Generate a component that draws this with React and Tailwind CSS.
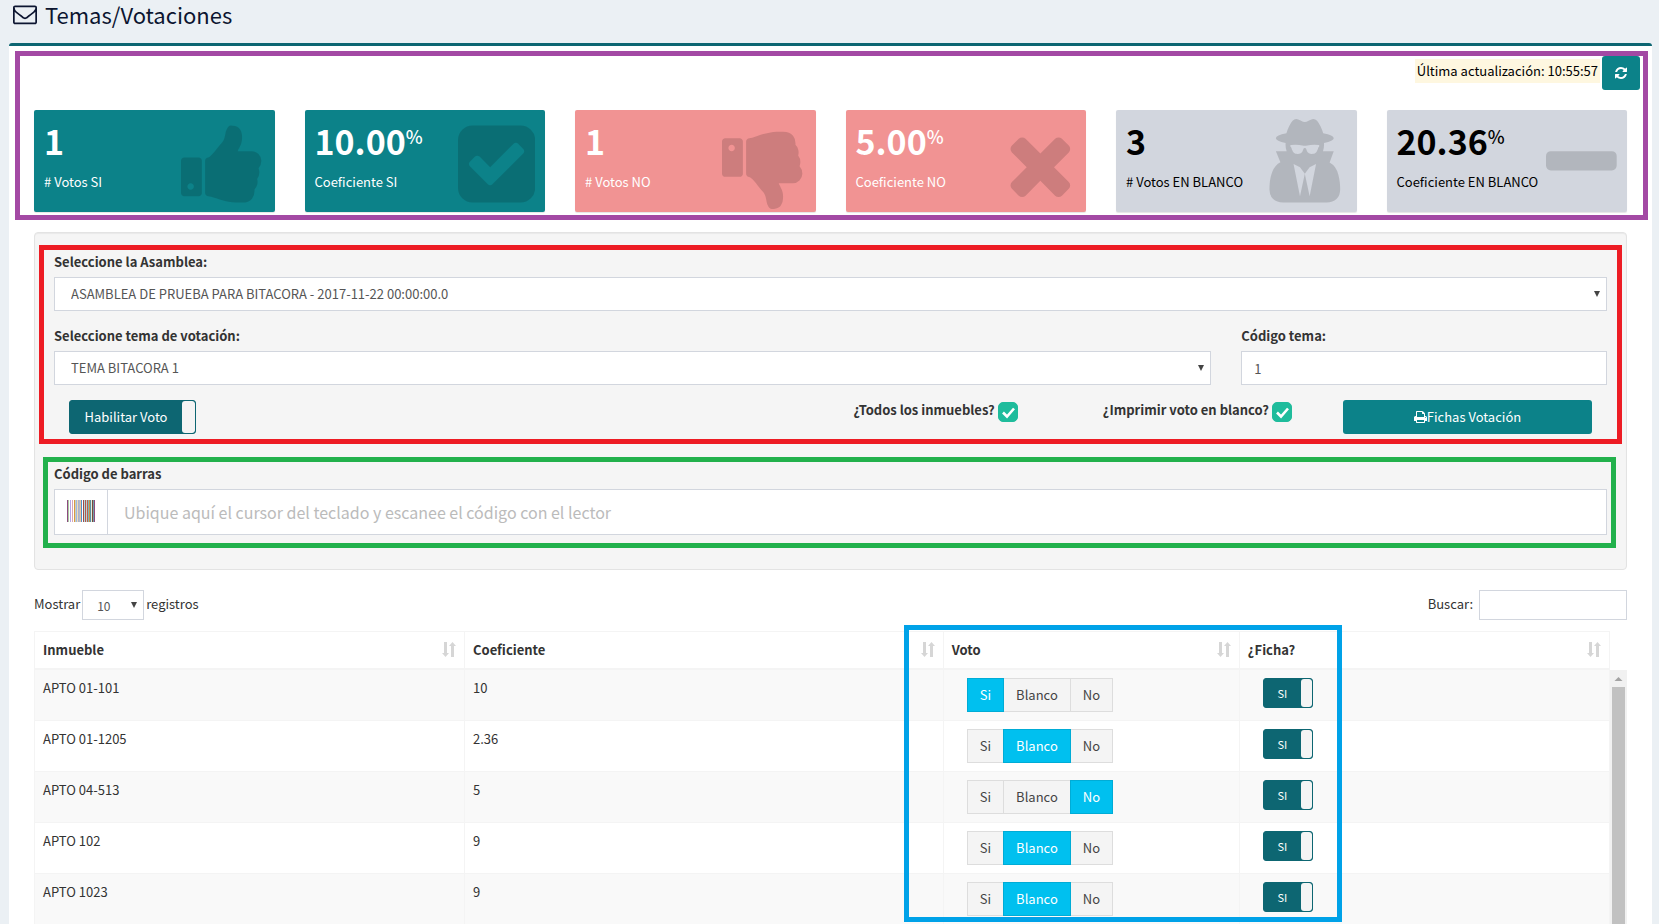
import React, { useState } from 'react';

const icons = {
  envelope: {
    viewBox: '0 0 1792 1792',
    d: 'M1664 1504v-768q-32 36-69 66-268 206-426 338-51 43-83 67t-86.5 48.5-102.5 24.5h-2q-48 0-102.5-24.5t-86.5-48.5-83-67q-158-132-426-338-37-30-69-66v768q0 13 9.5 22.5t22.5 9.5h1472q13 0 22.5-9.5t9.5-22.5zm0-1051v-24.5l-.5-13-3-12.5-5.5-9-9-7.5-14-2.5h-1472q-13 0-22.5 9.5t-9.5 22.5q0 168 147 284 193 152 401 317 6 5 35 29.5t46 37.5 44.5 31.5 50.5 27.5 43 9h2q20 0 43-9t50.5-27.5 44.5-31.5 46-37.5 35-29.5q208-165 401-317 54-43 100.5-115.5t46.5-131.5zm128-37v1088q0 66-47 113t-113 47h-1472q-66 0-113-47t-47-113v-1088q0-66 47-113t113-47h1472q66 0 113 47t47 113z'
  },
  refresh: {
    viewBox: '128 0 1536 1792',
    d: 'M1639 1056q0 5-1 7-64 268-268 434.5t-478 166.5q-146 0-282.5-55t-243.5-157l-129 129q-19 19-45 19t-45-19-19-45v-448q0-26 19-45t45-19h448q26 0 45 19t19 45-19 45l-137 137q71 66 161 102t187 36q134 0 250-65t186-179q11-17 53-117 8-23 30-23h192q13 0 22.5 9.5t9.5 22.5zm25-800v448q0 26-19 45t-45 19h-448q-26 0-45-19t-19-45 19-45l138-138q-148-137-349-137-134 0-250 65t-186 179q-11 17-53 117-8 23-30 23h-199q-13 0-22.5-9.5t-9.5-22.5v-7q65-268 270-434.5t480-166.5q146 0 284 55.5t245 156.5l130-129q19-19 45-19t45 19 19 45z'
  },
  print: {
    viewBox: '64 0 1664 1792',
    d: 'M448 1536h896v-256h-896v256zm0-640h896v-384h-160q-40 0-68-28t-28-68v-160h-640v640zm1152 64q0-26-19-45t-45-19-45 19-19 45 19 45 45 19 45-19 19-45zm128 0v416q0 13-9.5 22.5t-22.5 9.5h-224v160q0 40-28 68t-68 28h-960q-40 0-68-28t-28-68v-160h-224q-13 0-22.5-9.5t-9.5-22.5v-416q0-79 56.5-135.5t135.5-56.5h64v-544q0-40 28-68t68-28h672q40 0 88 20t76 48l152 152q28 28 48 76t20 88v256h64q79 0 135.5 56.5t56.5 135.5z'
  },
  thumbsUp: {
    viewBox: '64 0 1664 1792',
    d: 'M320 1344q0-26-19-45t-45-19q-27 0-45.5 19t-18.5 45q0 27 18.5 45.5t45.5 18.5q26 0 45-18.5t19-45.5zm160-512v640q0 26-19 45t-45 19h-288q-26 0-45-19t-19-45v-640q0-26 19-45t45-19h288q26 0 45 19t19 45zm1184 0q0 86-55 149 15 44 15 76 3 76-43 137 17 56 0 117-15 57-54 94 9 112-49 181-64 76-197 78h-129q-66 0-144-15.5t-121.5-29-120.5-39.5q-123-43-158-44-26-1-45-19.5t-19-44.5v-641q0-25 18-43.5t43-20.5q24-2 76-59t101-121q68-87 101-120 18-18 31-48t17.5-48.5 13.5-60.5q7-39 12.5-61t19.5-52 34-50q19-19 45-19 46 0 82.5 10.5t60 26 40 40.5 24 45 12 50 5 45 .5 39q0 38-9.5 76t-19 60-27.5 56q-3 6-10 18t-11 22-8 24h277q78 0 135 57t57 135z'
  },
  thumbsDown: {
    viewBox: '64 0 1664 1792',
    d: 'M320 576q0 26-19 45t-45 19q-27 0-45.5-19t-18.5-45q0-27 18.5-45.5t45.5-18.5q26 0 45 18.5t19 45.5zm160 512v-640q0-26-19-45t-45-19h-288q-26 0-45 19t-19 45v640q0 26 19 45t45 19h288q26 0 45-19t19-45zm1129-149q55 61 55 149-1 78-57.5 135t-134.5 57h-277q4 14 8 24t11 22 10 18q18 37 27 57t19 58.5 10 76.5q0 24-.5 39t-5 45-12 50-24 45-40 40.5-60 26-82.5 10.5q-26 0-45-19-20-20-34-50t-19.5-52-12.5-61q-9-42-13.5-60.5t-17.5-48.5-31-48q-33-33-101-120-49-64-101-121t-76-59q-25-2-43-20.5t-18-43.5v-641q0-26 19-44.5t45-19.5q35-1 158-44 77-26 120.5-39.5t121.5-29 144-15.5h129q133 2 197 78 58 69 49 181 39 37 54 94 17 61 0 117 46 61 43 137 0 32-15 76z'
  },
  checkSquare: {
    viewBox: '128 0 1536 1792',
    d: 'M813 1299l614-614q19-19 19-45t-19-45l-102-102q-19-19-45-19t-45 19l-467 467-211-211q-19-19-45-19t-45 19l-102 102q-19 19-19 45t19 45l358 358q19 19 45 19t45-19zm851-883v960q0 119-84.5 203.5t-203.5 84.5h-960q-119 0-203.5-84.5t-84.5-203.5v-960q0-119 84.5-203.5t203.5-84.5h960q119 0 203.5 84.5t84.5 203.5z'
  },
  times: {
    viewBox: '192 0 1408 1792',
    d: 'M1490 1322q0 40-28 68l-136 136q-28 28-68 28t-68-28l-294-294-294 294q-28 28-68 28t-68-28l-136-136q-28-28-28-68t28-68l294-294-294-294q-28-28-28-68t28-68l136-136q28-28 68-28t68 28l294 294 294-294q28-28 68-28t68 28l136 136q28 28 28 68t-28 68l-294 294 294 294q28 28 28 68z'
  },
  secret: {
    viewBox: '215 0 1536 1792',
    d: 'M832 1536l96-448-96-128-128-64zm192 0l128-640-128 64-96 128zm192-1010q-2-4-4-6-10-8-96-8-70 0-167 19-7 2-21 2t-21-2q-97-19-167-19-86 0-96 8-2 2-4 6 2 18 4 27 2 3 7.5 6.5t7.5 10.5q2 4 7.5 20.5t7 20.5 7.5 17 8.5 17 9 14 12 13.5 14 9.5 17.5 8 20.5 4 24.5 2q36 0 59-12.5t32.5-30 14.5-34.5 11.5-29.5 17.5-12.5h12q11 0 17.5 12.5t11.5 29.5 14.5 34.5 32.5 30 59 12.5q13 0 24.5-2t20.5-4 17.5-8 14-9.5 12-13.5 9-14 8.5-17 7.5-17 7-20.5 7.5-20.5q2-7 7.5-10.5t7.5-6.5q2-9 4-27zm416 879q0 121-73 190t-194 69h-874q-121 0-194-69t-73-190q0-61 4.5-118t19-125.5 37.5-123.5 63.5-103.5 93.5-74.5l-90-220h214q-22-64-22-128 0-12 2-32-194-40-194-96 0-57 210-99 17-62 51.5-134t70.5-114q32-37 76-37 30 0 84 31t84 31 84-31 84-31q44 0 76 37 36 42 70.5 114t51.5 134q210 42 210 99 0 56-194 96 7 81-20 160h214l-82 225q63 33 107.5 96.5t65.5 143.5 29 151.5 8 148.5z'
  },
  minus: {
    viewBox: '192 0 1408 1792',
    d: 'M1600 736v192q0 40-28 68t-68 28h-1216q-40 0-68-28t-28-68v-192q0-40 28-68t68-28h1216q40 0 68 28t28 68z'
  }
};

const Icon = ({ name, className }) => (
  <svg viewBox={icons[name].viewBox} className={className} fill="currentColor" aria-hidden="true">
    <path d={icons[name].d} />
  </svg>
);

const stats = [
  { value: '1', label: '# Votos SI', icon: 'thumbsUp', color: 'bg-[#0c8289] text-white' },
  { value: '10.00', percent: true, label: 'Coeficiente SI', icon: 'checkSquare', color: 'bg-[#0c8289] text-white' },
  { value: '1', label: '# Votos NO', icon: 'thumbsDown', color: 'bg-[#f19393] text-white' },
  { value: '5.00', percent: true, label: 'Coeficiente NO', icon: 'times', color: 'bg-[#f19393] text-white' },
  { value: '3', label: '# Votos EN BLANCO', icon: 'secret', color: 'bg-[#d2d6de] text-black' },
  { value: '20.36', percent: true, label: 'Coeficiente EN BLANCO', icon: 'minus', color: 'bg-[#d2d6de] text-black' }
];

const rows = [
  { id: 1, inmueble: 'APTO 01-101', coeficiente: '10', voto: 'Si' },
  { id: 2, inmueble: 'APTO 01-1205', coeficiente: '2.36', voto: 'Blanco' },
  { id: 3, inmueble: 'APTO 04-513', coeficiente: '5', voto: 'No' },
  { id: 4, inmueble: 'APTO 102', coeficiente: '9', voto: 'Blanco' },
  { id: 5, inmueble: 'APTO 1023', coeficiente: '9', voto: 'Blanco' }
];

const columns = [
  { label: 'Inmueble', width: 'w-[27.3%]' },
  { label: 'Coeficiente', width: 'w-[30.4%]' },
  { label: 'Voto', width: 'w-[18.8%]' },
  { label: '¿Ficha?', width: 'w-[23.5%]' }
];

const StatCard = ({ value, percent, label, icon, color }) => (
  <div className={`relative h-[102px] rounded-xs p-[10px] shadow-[0_1px_1px_rgba(0,0,0,0.1)] ${color}`}>
    <p className="mb-[10px] flex h-[42px] items-center text-[34px] leading-[42px] font-bold">
      {value}
      {percent && <sup className="top-0 mb-[10px] text-[18px] leading-5 font-medium">%</sup>}
    </p>
    <p className="text-[13px] leading-5">{label}</p>
    <Icon name={icon} className="absolute top-[9px] right-[10px] h-[90px] w-auto text-black/15" />
  </div>
);

const Caret = ({ className }) => (
  <svg viewBox="0 0 6 6" className={`pointer-events-none absolute h-[6px] w-[6px] ${className}`} fill="#444" aria-hidden="true">
    <path d="M0 0h6L3 6z" />
  </svg>
);

const SelectBox = ({ id, value }) => (
  <div className="relative">
    <select id={id} className="h-[34px] w-full appearance-none border border-[#d2d6de] bg-white px-4 text-[13px] text-[#555]">
      <option>{value}</option>
    </select>
    <Caret className="top-[14px] right-[7px]" />
  </div>
);

const CheckBox = ({ label }) => {
  const [checked, setChecked] = useState(true);
  return (
    <label className="flex items-start gap-[3px] font-bold">
      <span>{label}</span>
      <span className="relative mt-[2px] h-5 w-5">
        <input
          type="checkbox"
          checked={checked}
          onChange={() => setChecked(!checked)}
          className="block h-5 w-5 appearance-none rounded-[5px] border border-[#1fbc9c] bg-white checked:bg-[#1fbc9c]"
        />
        <svg viewBox="0 0 20 20" className="pointer-events-none absolute inset-0" fill="none" stroke="#fff" strokeWidth="2.6" aria-hidden="true">
          <path d="M5 10.500l4 4 7-8" />
        </svg>
      </span>
    </label>
  );
};

const Toggle = ({ label, title, className, handle }) => {
  const [on, setOn] = useState(true);
  return (
    <button
      type="button"
      role="switch"
      aria-checked={on}
      aria-label={title}
      onClick={() => setOn(!on)}
      className={`flex overflow-hidden rounded-[3px] border border-[#0d6672] bg-[#0d6672] text-white ${className}`}
    >
      <span className="flex flex-1 items-center justify-center self-stretch">{label}</span>
      <span className={`self-stretch rounded-[3px] bg-[#f4f4f4] ${handle}`}></span>
    </button>
  );
};

const VoteGroup = ({ initial }) => {
  const [vote, setVote] = useState(initial);
  return (
    <div className="ml-[15px] flex">
      {['Si', 'Blanco', 'No'].map(option => (
        <button
          key={option}
          type="button"
          aria-pressed={vote === option}
          onClick={() => setVote(option)}
          className={`-mr-px h-[34px] border px-3 ${
            vote === option
              ? 'relative border-[#00acd6] bg-[#00c0ef] text-white'
              : 'border-[#ddd] bg-[#f4f4f4] text-[#444]'
          }`}
        >
          {option}
        </button>
      ))}
    </div>
  );
};

const SortIcon = () => (
  <svg viewBox="0 0 14 15" className="h-[15px] w-[14px]" fill="#d6d6d6" aria-hidden="true">
    <path d="M2 0h3v11h2l-3.500 4L0 11h2zM9 15h3V4h2L10.500 0 7 4h2z" />
  </svg>
);

const bars = [
  '#8d4a80', '#a9c9a0', '#fff', '#b5a6e6', '#fff', '#d9a6b4', '#fff', '#d9983f', '#c9d3c0', '#9fb6e0',
  '#f3dcb4', '#a9b4cd', '#b9b9c4', '#f0c49a', '#4f8fc9', '#fff', '#a04a4a', '#b0dde0', '#b05a4a', '#b9cdd9',
  '#c0604a', '#7db8b5', '#c9904a', '#5f8fa0', '#e0f0e0', '#7a4a3a', '#6f9fa8', '#8d4a80'
];

const Barcode = () => (
  <svg viewBox="0 0 28 22" className="h-[22px] w-7" shapeRendering="crispEdges" aria-hidden="true">
    {bars.map((color, i) => (
      <rect key={i} x={i} y="0" width="1" height="22" fill={color} />
    ))}
  </svg>
);

const App = () => {
  return (
    <div className="h-screen overflow-hidden bg-[#ebf0f4] pr-[7px] pl-[9px] font-['Noto_Sans_CJK_JP',sans-serif] text-[13px] leading-5 text-[#333]">
      <h1 className="flex h-[43px] items-start gap-2 pt-[2px] pl-1 text-[22px] leading-6 text-[#0c1530]">
        <Icon name="envelope" className="h-6 w-6" />
        Temas/Votaciones
      </h1>

      <main className="h-full rounded-t-[3px] border-t-[3px] border-[#0d6672] bg-white">
        {/* Resumen */}
        <section className="relative px-[25px] pt-[10px]">
          <div className="pointer-events-none absolute top-[5px] right-1 -bottom-2 left-[6px] border-5 border-[#a349a4]"></div>
          <div className="-mr-[13px] mb-5 flex items-start justify-end gap-[2px]">
            <span className="mt-[3px] bg-[#fef7e0] px-[2px] py-[2px] text-black">Última actualización: 10:55:57</span>
            <button type="button" aria-label="Actualizar" className="flex h-[34px] w-[38px] items-center justify-center rounded-[3px] bg-[#0c8289] text-white">
              <Icon name="refresh" className="h-[14px] w-3" />
            </button>
          </div>
          <div className="grid grid-cols-6 gap-[30px]">
            {stats.map(stat => (
              <StatCard key={stat.label} {...stat} />
            ))}
          </div>
        </section>

        {/* Formulario */}
        <section className="mx-[25px] mt-5 rounded-sm border border-[#e3e3e3] bg-[#f5f5f5] px-[19px] pt-[19px] pb-[34px] shadow-[inset_0_1px_1px_rgba(0,0,0,0.05)]">
          <div className="relative">
            <div className="pointer-events-none absolute -top-[7px] -right-[15px] -bottom-[10px] -left-[15px] border-5 border-[#ed1c24]"></div>
            <label htmlFor="asamblea" className="mb-[5px] block font-bold">Seleccione la Asamblea:</label>
            <SelectBox id="asamblea" value="ASAMBLEA DE PRUEBA PARA BITACORA - 2017-11-22 00:00:00.0" />
            <div className="mt-[15px] grid grid-cols-12 gap-[30px]">
              <div className="col-span-9">
                <label htmlFor="tema" className="mb-[5px] block font-bold">Seleccione tema de votación:</label>
                <SelectBox id="tema" value="TEMA BITACORA 1" />
              </div>
              <div className="col-span-3">
                <label htmlFor="codigo" className="mb-[5px] block font-bold">Código tema:</label>
                <input id="codigo" type="text" defaultValue="1" className="block h-[34px] w-full border border-[#d2d6de] bg-white px-3 text-[#555]" />
              </div>
            </div>
            <div className="mt-[15px] flex items-start px-[15px]">
              <Toggle label="Habilitar Voto" className="h-[34px] w-[127px]" handle="w-[13px]" />
              <div className="ml-auto flex gap-[85px]">
                <CheckBox label="¿Todos los inmuebles?" />
                <CheckBox label="¿Imprimir voto en blanco?" />
              </div>
              <button type="button" className="ml-[51px] flex h-[34px] w-[249px] items-center justify-center rounded-[3px] bg-[#0c8289] text-white">
                <Icon name="print" className="h-[14px] w-[13px]" />
                Fichas Votación
              </button>
            </div>
          </div>

          <div className="relative mt-[30px]">
            <div className="pointer-events-none absolute -top-[7px] -right-[9px] -bottom-[13px] -left-[11px] border-5 border-[#22b14c]"></div>
            <label htmlFor="barras" className="mb-[5px] block font-bold">Código de barras</label>
            <div className="flex h-[46px] border border-[#d2d6de] bg-white">
              <span className="flex w-[53px] items-center justify-center border-r border-[#d2d6de] pb-[2px]">
                <Barcode />
              </span>
              <input
                id="barras"
                type="text"
                placeholder="Ubique aquí el cursor del teclado y escanee el código con el lector"
                className="min-w-0 flex-1 px-4 text-[16px] placeholder:text-[#bbb]"
              />
            </div>
          </div>
        </section>

        {/* Tabla */}
        <section className="mx-[25px] mt-5">
          <div className="flex justify-between">
            <label className="flex gap-[2px]">
              <span className="pt-1">Mostrar</span>
              <span className="relative">
                <select className="h-[30px] w-[62px] appearance-none border border-[#d2d6de] bg-white pt-[2px] pl-[14px] text-[12px] text-[#555]">
                  <option>10</option>
                </select>
                <Caret className="top-3 right-[7px]" />
              </span>
              <span className="pt-1">registros</span>
            </label>
            <label className="flex gap-[6px]">
              <span className="pt-1">Buscar:</span>
              <input type="search" className="h-[30px] w-[148px] border border-[#d2d6de] bg-white px-2" />
            </label>
          </div>

          <div className="relative mt-[11px] flex">
            <div className="pointer-events-none absolute -top-[6px] right-[17.9%] bottom-[3px] left-[54.6%] z-10 border-5 border-[#00a2e8]"></div>
            <table className="flex-1 table-fixed border-collapse">
              <thead>
                <tr className="h-[37px]">
                  {columns.map(column => (
                    <th key={column.label} className={`border border-b-2 border-[#f4f4f4] px-2 text-left font-bold ${column.width}`}>
                      <div className="flex items-center justify-between">
                        {column.label}
                        <SortIcon />
                      </div>
                    </th>
                  ))}
                </tr>
              </thead>
              <tbody>
                {rows.map(row => (
                  <tr key={row.id} className="h-[51px] align-top odd:bg-[#f9f9f9]">
                    <td className="border border-[#f4f4f4] p-2">{row.inmueble}</td>
                    <td className="border border-[#f4f4f4] p-2">{row.coeficiente}</td>
                    <td className="border border-[#f4f4f4] p-2">
                      <VoteGroup initial={row.voto} />
                    </td>
                    <td className="border border-[#f4f4f4] p-2">
                      <Toggle label="SI" title={`Ficha ${row.inmueble}`} className="ml-[15px] h-[30px] w-[50px] text-[11px]" handle="w-[11px]" />
                    </td>
                  </tr>
                ))}
              </tbody>
            </table>
            <div className="mt-[39px] flex w-[17px] flex-col items-center bg-[#f1f1f1]">
              <svg viewBox="0 0 17 17" className="h-[17px] w-[17px]" fill="#a3a3a3" aria-hidden="true">
                <path d="M4.500 11h8l-4-4z" />
              </svg>
              <div className="w-[13px] flex-1 bg-[#c1c1c1]"></div>
            </div>
          </div>
        </section>
      </main>
    </div>
  );
};

export default App;
